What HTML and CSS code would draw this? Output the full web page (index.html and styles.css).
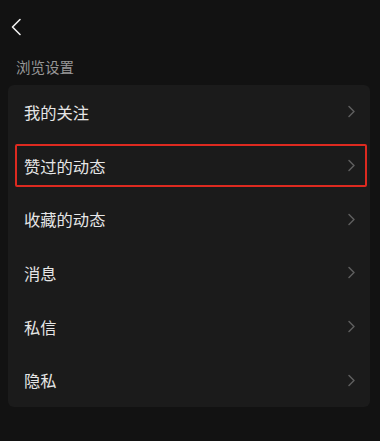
FILE: index.html
```html
<!DOCTYPE html>
<html lang="zh">
<head>
<meta charset="utf-8">
<link rel="stylesheet" href="styles.css">
</head>
<body>
<div class="page">
  <div class="topbar">
    <svg class="back" width="12" height="18" viewBox="0 0 12 18"><path d="M10 1.5 L2.5 9 L10 16.5" fill="none" stroke="#f0f0f0" stroke-width="1.6" stroke-linecap="round" stroke-linejoin="round"/></svg>
  </div>
  <div class="section-title">浏览设置</div>
  <div class="card">
    <div class="row"><span class="label">我的关注</span><svg class="chev" width="9" height="13" viewBox="0 0 9 13"><path d="M2 1.5 L7 6.5 L2 11.5" fill="none" stroke="#5e5e5e" stroke-width="1.5" stroke-linecap="round" stroke-linejoin="round"/></svg></div>
    <div class="row highlight"><span class="label">赞过的动态</span><svg class="chev" width="9" height="13" viewBox="0 0 9 13"><path d="M2 1.5 L7 6.5 L2 11.5" fill="none" stroke="#5e5e5e" stroke-width="1.5" stroke-linecap="round" stroke-linejoin="round"/></svg></div>
    <div class="row"><span class="label">收藏的动态</span><svg class="chev" width="9" height="13" viewBox="0 0 9 13"><path d="M2 1.5 L7 6.5 L2 11.5" fill="none" stroke="#5e5e5e" stroke-width="1.5" stroke-linecap="round" stroke-linejoin="round"/></svg></div>
    <div class="row"><span class="label">消息</span><svg class="chev" width="9" height="13" viewBox="0 0 9 13"><path d="M2 1.5 L7 6.5 L2 11.5" fill="none" stroke="#5e5e5e" stroke-width="1.5" stroke-linecap="round" stroke-linejoin="round"/></svg></div>
    <div class="row"><span class="label">私信</span><svg class="chev" width="9" height="13" viewBox="0 0 9 13"><path d="M2 1.5 L7 6.5 L2 11.5" fill="none" stroke="#5e5e5e" stroke-width="1.5" stroke-linecap="round" stroke-linejoin="round"/></svg></div>
    <div class="row"><span class="label">隐私</span><svg class="chev" width="9" height="13" viewBox="0 0 9 13"><path d="M2 1.5 L7 6.5 L2 11.5" fill="none" stroke="#5e5e5e" stroke-width="1.5" stroke-linecap="round" stroke-linejoin="round"/></svg></div>
  </div>
</div>
</body>
</html>
```
FILE: styles.css
```css
html, body {
  margin: 0;
  padding: 0;
  background: #121212;
}
body {
  font-family: "Noto Sans CJK SC", "Noto Sans", sans-serif;
  width: 380px;
  height: 441px;
  overflow: hidden;
}
.page {
  display: flex;
  flex-direction: column;
}
.topbar {
  height: 44px;
  display: flex;
  align-items: center;
  padding-left: 10px;
  box-sizing: border-box;
  padding-top: 10px;
}
.back {
  display: block;
}
.section-title {
  margin-top: 13px;
  padding-left: 16px;
  font-size: 14.5px;
  line-height: 20px;
  color: #979797;
  height: 20px;
}
.card {
  margin: 8px 10px 0 8px;
  background: #1b1b1b;
  border-radius: 6px;
  display: flex;
  flex-direction: column;
}
.row {
  position: relative;
  height: 53.7px;
  display: flex;
  align-items: center;
  justify-content: space-between;
  padding: 0 14px 0 16px;
}
.label {
  font-size: 16.3px;
  color: #e6e6e6;
}
.chev {
  display: block;
}
.highlight::after {
  content: "";
  position: absolute;
  left: 7px;
  right: 3px;
  top: 5px;
  bottom: 5px;
  border: 2.5px solid #dd2a20;
  border-radius: 2px;
}
```
